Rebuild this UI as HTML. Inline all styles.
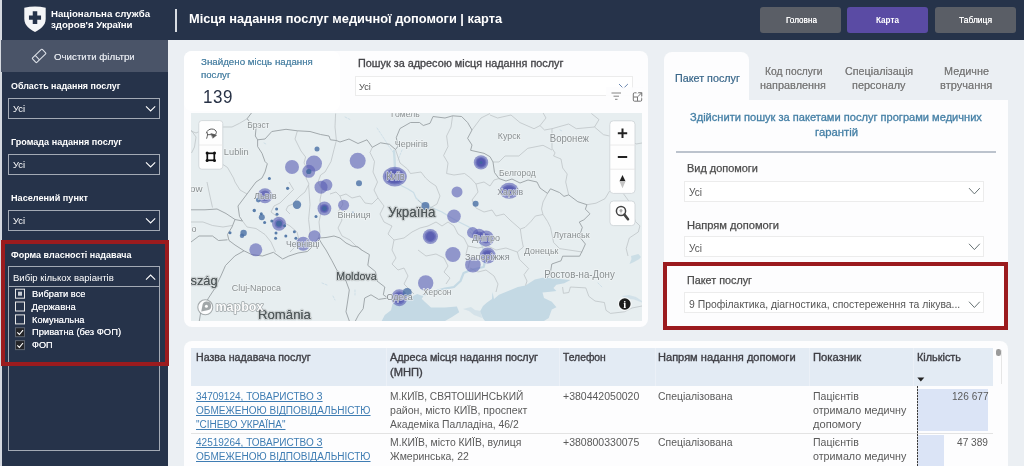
<!DOCTYPE html>
<html lang="uk">
<head>
<meta charset="utf-8">
<title>Місця надання послуг медичної допомоги | карта</title>
<style>
html,body{margin:0;padding:0;}
body{width:1024px;height:466px;overflow:hidden;position:relative;background:#ebeff3;font-family:"Liberation Sans",sans-serif;}
.b{position:absolute;box-sizing:border-box;}
.t{position:absolute;white-space:pre;transform-origin:0 50%;}
svg{position:absolute;overflow:visible;}
</style>
</head>
<body>
<!-- header + sidebar -->
<div class="b" style="left:0;top:0;width:1024px;height:40px;background:#26334a"></div>
<div class="b" style="left:0;top:40px;width:168px;height:426px;background:#26334a"></div>
<div class="b" style="left:0;top:0;width:1.5px;height:466px;background:#d5d9e0"></div>
<div class="b" style="left:1px;top:40px;width:167px;height:32px;background:#4a5468"></div>
<div class="b" style="left:175px;top:9px;width:2px;height:23px;background:#d8dce2"></div>
<!-- logo shield -->
<svg style="left:23px;top:6px" width="24" height="27" viewBox="0 0 24 27">
<path d="M1.3 1.7Q12 -0.9 22.7 1.7L22.7 13C22.7 19.5 17 23.6 12 25.9C7 23.6 1.3 19.5 1.3 13Z" fill="#f4f5f7"/>
<path d="M9.75 5.3h4.5v4.2h3.8v4.2h-3.8v4.2h-4.5v-4.2h-3.8v-4.2h3.8z" fill="#26334a"/>
</svg>
<!-- nav buttons -->
<div class="b" style="left:760px;top:7px;width:80.5px;height:25.5px;border-radius:3px;background:#5a5e66"></div>
<div class="b" style="left:847px;top:7px;width:80.5px;height:25.5px;border-radius:3px;background:#5a4ba4"></div>
<div class="b" style="left:935px;top:7px;width:80.5px;height:25.5px;border-radius:3px;background:#5a5e66"></div>
<!-- eraser icon -->
<svg style="left:31px;top:48px" width="17" height="16" viewBox="0 0 17 16" fill="none" stroke="#dde1e8" stroke-width="1.05" stroke-linejoin="round">
<g transform="translate(8.1,7.9) rotate(-44)"><rect x="-6.8" y="-3.1" width="13.6" height="6.2" rx="0.7"/><path d="M-2.4 -3.1v6.2"/></g>
</svg>
<!-- sidebar dropdowns -->
<div class="b" style="left:8px;top:98px;width:152px;height:21px;border:1px solid #a3aab5"></div>
<div class="b" style="left:8px;top:154px;width:152px;height:21px;border:1px solid #a3aab5"></div>
<div class="b" style="left:8px;top:210px;width:152px;height:21px;border:1px solid #a3aab5"></div>
<div class="b" style="left:8px;top:266px;width:152px;height:21px;border:1px solid #a3aab5"></div>
<div class="b" style="left:8px;top:286px;width:152px;height:165px;border:1px solid #a3aab5"></div>
<svg style="left:0;top:0" width="168" height="466" fill="none" stroke="#fff" stroke-width="1.1">
<path d="M146 106.3l4.6 4.6l4.6-4.6"/><path d="M146 162.3l4.6 4.6l4.6-4.6"/><path d="M146 218.3l4.6 4.6l4.6-4.6"/><path d="M146 279.6l4.6-4.6l4.6 4.6"/>
<!-- checkboxes -->
<rect x="15.5" y="289.2" width="9" height="9" stroke="#e8e8e8" stroke-width="1"/><rect x="18" y="291.7" width="4" height="4" fill="#c8ccd3" stroke="none"/>
<rect x="15.5" y="302" width="9" height="9" stroke="#e8e8e8" stroke-width="1"/>
<rect x="15.5" y="314.9" width="9" height="9" stroke="#e8e8e8" stroke-width="1"/>
<rect x="15.5" y="327.7" width="9" height="9" fill="#232428" stroke="#5d6470" stroke-width="1"/><path d="M17.3 332.4l2.1 2.1l3.6-4.4" stroke-width="1.1"/>
<rect x="15.5" y="340.6" width="9" height="9" fill="#232428" stroke="#5d6470" stroke-width="1"/><path d="M17.3 345.3l2.1 2.1l3.6-4.4" stroke-width="1.1"/>
</svg>
<!-- red highlight sidebar -->
<div class="b" style="left:1px;top:240.3px;width:168px;height:125.3px;border:4.4px solid #9b1b1e"></div>

<!-- map card -->
<div class="b" style="left:184px;top:51px;width:464px;height:276px;border-radius:8px;background:#fdfdfe"></div>
<div class="b" style="left:184px;top:51px;width:156px;height:60px;border-radius:8px;background:#fff"></div>
<div class="b" style="left:355px;top:76px;width:278px;height:20px;border:1px solid #ececec;background:#fff"></div>
<svg style="left:600px;top:78px" width="48" height="28" viewBox="600 78 48 28" fill="none">
<path d="M619 84l4.45 4.45l4.45-4.45" stroke="#6a86b0" stroke-width="1"/>
<rect x="606" y="87.3" width="37" height="17.7" fill="#fdfdfe" opacity="0.92"/>
<path d="M611.5 93h9.5M613.5 96.2h5.5M615 99.3h2.5" stroke="#777" stroke-width="0.9"/>
<rect x="633.3" y="92.8" width="8.4" height="8.4" rx="1.2" stroke="#666" stroke-width="0.9"/>
<path d="M636.5 92.2h6v6" stroke="#fdfdfe" stroke-width="2.4"/>
<path d="M638.2 92.7h3.6v3.6M641.6 92.9l-3.9 3.9M633.6 97h3.9v3.9" stroke="#666" stroke-width="0.9"/>
</svg>
<svg style="left:191px;top:113px;overflow:hidden;will-change:transform;opacity:0.999" width="451" height="208" viewBox="191 113 451 208" font-family="'Liberation Sans', sans-serif">
<rect x="191" y="113" width="451" height="208" fill="#e7eef0"/>
<!-- water -->
<g fill="#c4d9e4">
<path d="M381.7 321L384.8 315L391 310.2L392.5 304L404.9 301L412.6 296.3L417.2 294L423.4 296.3L421.7 298.8L425 302L431 307.6L445 307.6L456.9 306.4L459.2 312.3L452 317L445 321Z"/>
<path d="M485 321L482.7 318L480.3 311L483 306L487 302.5L492 299L492.5 292L494 299L499 294.8L510 290.2L517.8 287L525.5 285.5L534.8 279.4L542.5 277.8L555 278.6L570.4 280L564.2 283.2L556.4 284.8L553.4 287.9L556.4 291L550.3 291.7L542.5 292.5L544 298L551.8 301.8L556.4 307.2L551.8 309.5L548.7 318L544 321Z"/>
<path d="M463 309l6 2l5 4l8 3l-1-7l-6-1l-4-3z" opacity="0.55"/>
<path d="M631 256L638.4 254L641 257L639 259.3L633 262.5L629.5 264L631.5 259Z" opacity="0.8"/>
<path d="M622 296l7 -1l7 2l6 4v1.4l-8-3l-8-1z" opacity="0.6"/>
</g>
<!-- rivers -->
<g fill="none" stroke="#c4d9e4" stroke-linecap="round" stroke-linejoin="round">
<path d="M394 151L394.6 160L395 168" stroke-width="2.4" stroke-opacity="0.8"/>
<path d="M395 168L397 180L400 185L408 189L413.6 192.5L416 198L419.6 201.5L430 206.8L442 212L450 217L457 221L469 227L474 232" stroke-width="1.2" stroke-opacity="0.85"/>
<path d="M486 256L483.7 267L471 270L463.6 273L460.5 281L454 287L445 288.6L432.7 291.7L423.4 294.8" stroke-width="2.2"/>
<path d="M470 232l6 6l6 8l4 10" stroke-width="1.2"/>
<path d="M377 128l6 9l5 8l5 7M402 150l-4 10M345 117l6 3M232 152l3 3M264 143l2 1M322 283l5 2M333 296l2 4M355 290v5M560 130l2 1M598 283l4 4M614 124l3 2" stroke-width="0.7" stroke-dasharray="2 1.5"/>
</g>
<!-- admin-1 borders (light) -->
<g fill="none" stroke="#b9bfc2" stroke-width="0.7" stroke-linejoin="round">
<path d="M297.4 130.8L295 139L301 151L305.6 157L304 163L308 170L306 178L309 184L305 192L300 196L296 200L293 204L288 206L286 210L290 214"/>
<path d="M336.4 140.5L334 149.5L331 161.5L325 172L320.6 175L318 182L322 190L320 200L321 212L319 222L320 232L318.5 238"/>
<path d="M335.6 113.5L335 127L336.4 140.5"/>
<path d="M247 118.8L239.5 123.3L232 127L223 127L214 131L205 129L196 133L191 131"/>
<path d="M223 164.5L227.5 167.5L233.5 178L235 182L240 190L247 194"/>
<path d="M191 130L196 137L194.5 147L191.5 153"/>
<path d="M207 182L209.5 194L212.5 207.5"/>
<path d="M191 222L203 222L212.5 225.5L223 227L232 225.5"/>
<path d="M372.3 147.3L370 152.5L374.5 161.5L373 172L377.5 182L374 190L378 198L372 204L365 203L360 196L352 198L346 194L340 196L336 192L330 194"/>
<path d="M395.5 149.5L400 163L407.5 169L410.5 173.5L421 172L425.6 178L430 182L436 186L440 196L437 204L430 208L422 204L418 200"/>
<path d="M452.6 115.8L451 127L446.6 136L448 146.5L443.6 155.5L448 163L446.6 173.5L454 175L464.6 173.5L470.6 178L476 184L484 182L490 186L494 180L499 178.6"/>
<path d="M490 113.5L481 118L472 130"/>
<path d="M490 115L497.6 118L511 115L520 122.6L534 128.7L540 125.6L546 118L543 112.8"/>
<path d="M540 125.6L544.5 130L552 128.7L568.7 124L576.3 128.7L594.5 127L599 119.6L591.4 113.5"/>
<path d="M594.5 127L603.5 134.7L609.6 136L620 140L630 138L636 144L642 143"/>
<path d="M552 128.7L552 148.3L555 152.9L553.6 156L561 159L562.7 168L567.2 174L565.7 182L568.7 194.9"/>
<path d="M552 150L543 145.3L527.8 148.3L518.8 156L505 156L499 162L493 162"/>
<path d="M547.5 193.4L543 202L541.5 209L543 214.5L535.4 216L531 221.4L525 227.4L520.3 229L521.8 239.5L523.3 247L517.3 252L519.4 259.3L528.6 268.5L524 274.7L527 281L525.5 285.5"/>
<path d="M543 214.5L547.5 221.4L550.5 227.4L553.6 242.5L559.6 248.6L582.3 252"/>
<path d="M586.9 204.7L596 203.2L605 198.7L609.6 191"/>
<path d="M623.2 193.4L629.3 201.7L635.3 221.4L639.9 225.9L638.3 232L629.3 238L626.2 248.6L628 256"/>
<path d="M562.6 287L563.4 293.3L568.8 292.5L570.4 287L585.8 287.9L588.9 296.4L595 301L604.4 302.5L606 310.3L610.5 313.4L624.4 311.8L632 308L642 306"/>
<path d="M242.5 221L247 227L256 228.5L265 234.5L271 242L275.5 252"/>
<path d="M289 182L293.5 189.5L280 203L274 206L271 212L277 216.5L283 222L290 226L297 232L299 240L296 246L290 252"/>
<path d="M308.6 185L310 204.5L308.6 219.5L310 231.5L308.6 237.5"/>
<path d="M340 196L343 204L338 212L342 220L338 228L342 236L350 240L356 246L362 250"/>
<path d="M378 198L384 206L380 214L384 222L392 226L388 234L394 240L404 238L412 232L420 228L428 226L436 222L442 226L448 222L454 226"/>
<path d="M394 240L392 250L396 258L392 264L398 270L404 268L408 276L404 284L410 290L414 294"/>
<path d="M454 226L458 234L464 238L468 246L466 254L470 260L468 268"/>
<path d="M418 250L426 256L436 254L444 258L448 266L444 272L450 278L446 284"/>
<path d="M476 184L478 192L472 200L476 208L484 212L492 210L496 216L504 214L510 220L520.3 229"/>
<path d="M468 246L478 248L488 246L496 250L506 248L517.3 252"/>
<path d="M470 268L478 272L486 270L494 276L498 284L496 292"/>
</g>
<!-- country borders (darker) -->
<g fill="none" stroke="#959c9f" stroke-width="0.85" stroke-linejoin="round">
<path d="M251.6 112.8L247 118.8L249.3 121L256 128.5L255.3 136L257.6 139.8"/>
<path d="M257.6 139.8L265 139L271.8 131.5L286 129.3L297.4 130.8L310 131.5L320.6 134.5L329 136L330.4 139.8L336.4 140.5L340 142L349 139L358 143.5L367 139.8L372.3 147.3L380.5 142.8L389.5 144.3L395.5 149.5L397.8 146.5L396.3 137.5L400 128.5L410.5 122.5L419.5 122.5L423.3 125.5L430 123.3L433 116.5L445 118L452.6 115.8L461.6 116.5L467.6 122.5L472 130L467.6 138.3L472 145L470.6 150.3L484 153.3L490 156.7L493 162L494.5 172.5L499 178.6L506 181L512 179L520 183L528 180L537 182L540 188L547.5 193.4L550.5 188.8L559.6 192.6L564 196.4L568.7 194.9L577.8 201.7L586.9 204.7L585.4 209.2L590 213.8L583.9 219.8L579.3 222L582.3 227.4L580.8 232L579.3 236.5L585.4 244L582.7 250L579.6 256.2L562.6 256.2L561 260.8L551.8 264L550.3 273.2L547.2 277.8"/>
<path d="M257.6 139.8L257.6 146.5L262 153.3L265 161.5L267.3 163.8L265 172L262 178L256 182L247 194L238 206L239.5 216.5L242.5 221L235 219.5L232 227L227.5 234.5L229 240.5L235 245L244 250.8L251.8 254.6L262.6 256L273.4 252.3L282.7 259L288.9 256L298 253L307.4 251.5L312 247L318.5 238L326 237.5L334 236L340 238L346 243L352 246L358 247L361.6 250L369.4 254.6L367.8 265.4L375.5 271.6L377 281L384.8 287L383.3 294.8L388 298L378.6 299.4L371 294.8L364.7 298L363.2 308.7L358.5 315L355.4 321"/>
<path d="M191 209.8L205 209.8L217 209L226 213.5L235 219.5"/>
<path d="M191 242L199 236L212.5 236L218.5 240.5L227.5 239.8"/>
<path d="M244 250.8L234.8 256L225.5 265.5L220.9 276L214.7 288.6L208.5 298L200.8 311.8L199.3 321"/>
<path d="M318.5 238L322 244L326 250L332 260.8L336.8 270L340 274.7L346 281L349.3 290L347.7 301L346 311.8L349.3 321"/>
</g>
<!-- data circles -->
<g fill="#5b5fb5" fill-opacity="0.62">
<circle cx="292" cy="167" r="7"/><circle cx="314" cy="163.6" r="8"/><circle cx="308.8" cy="171.3" r="6.5"/>
<circle cx="357.7" cy="160.8" r="8"/>
<ellipse cx="394.8" cy="176.6" rx="12" ry="9.8"/><ellipse cx="394.8" cy="176.6" rx="10" ry="8"/>
<circle cx="321" cy="187.2" r="6.5"/><circle cx="326.4" cy="185" r="6"/>
<circle cx="265" cy="195.8" r="7.5"/>
<circle cx="324.4" cy="208.5" r="6.9"/><circle cx="324.4" cy="208.5" r="4.5"/>
<circle cx="343.6" cy="205.2" r="5.5"/>
<circle cx="279" cy="223.7" r="7"/><circle cx="279" cy="223.7" r="4.5"/>
<circle cx="303.2" cy="243.8" r="7"/><circle cx="314.5" cy="236.2" r="6"/>
<circle cx="255.8" cy="249.8" r="6.5"/>
<circle cx="481" cy="162.4" r="7.2"/><circle cx="481" cy="162.4" r="5.5"/><circle cx="481" cy="162.4" r="3.6"/>
<ellipse cx="509.2" cy="190.8" rx="9.6" ry="8"/><ellipse cx="509.2" cy="190.8" rx="7.5" ry="6"/>
<circle cx="457" cy="191.9" r="5.5"/>
<circle cx="454" cy="216.2" r="6.8"/>
<circle cx="430.4" cy="236.5" r="7.6"/><circle cx="430.4" cy="236.5" r="5.8"/>
<circle cx="472.6" cy="232.6" r="5.6"/><circle cx="479" cy="235.2" r="6.5"/><circle cx="486" cy="238.4" r="8"/><circle cx="486" cy="238.4" r="5"/>
<circle cx="487.7" cy="255.6" r="8"/><circle cx="487.7" cy="255.6" r="6"/>
<circle cx="452.9" cy="254.5" r="7.6"/>
<circle cx="472.9" cy="264.7" r="7.8"/>
<circle cx="425.7" cy="283" r="7.7"/>
<ellipse cx="399.3" cy="297.8" rx="8" ry="8.5"/><ellipse cx="399.3" cy="297.8" rx="6" ry="6.5"/>
</g>
<g fill="#4a4eaa" fill-opacity="0.55">
<ellipse cx="394.6" cy="176.6" rx="8.6" ry="6.6"/>
<circle cx="265" cy="195.8" r="5.2"/>
<ellipse cx="509.2" cy="190.8" rx="6" ry="4.6"/>
<circle cx="486" cy="238.4" r="4"/><circle cx="479" cy="235.2" r="3.6"/>
<circle cx="487.7" cy="255.6" r="4.6"/>
<ellipse cx="399.3" cy="297.8" rx="4.6" ry="5"/>
<circle cx="481" cy="162.4" r="4.4"/>
<circle cx="430.4" cy="236.5" r="4.4"/>
<circle cx="324.4" cy="208.5" r="3.4"/>
</g>
<g fill="#4a6fa5" fill-opacity="0.8">
<circle cx="317" cy="149" r="2.5"/><circle cx="359" cy="183.3" r="3"/><circle cx="297" cy="204.8" r="4.2"/>
<circle cx="407.2" cy="292.5" r="4.5"/><circle cx="475.6" cy="203.8" r="3"/><circle cx="425.4" cy="206" r="4"/>
<circle cx="243.6" cy="233" r="3.2"/><circle cx="242" cy="235.8" r="2.2"/>
<circle cx="261.8" cy="217.3" r="3"/><circle cx="258.3" cy="200" r="2.4"/>
</g>
<g fill="#3f689e" fill-opacity="0.85">
<circle cx="269.4" cy="178.5" r="1.5"/><circle cx="287.6" cy="188.3" r="1.6"/><circle cx="254.3" cy="210.5" r="1.7"/><circle cx="276.6" cy="209" r="1.5"/>
<circle cx="277" cy="214.3" r="1.5"/><circle cx="261.3" cy="213.8" r="1.5"/><circle cx="264.6" cy="222.5" r="1.5"/><circle cx="271.8" cy="221" r="1.5"/>
<circle cx="316" cy="216.5" r="1.5"/><circle cx="284.6" cy="225.8" r="1.5"/><circle cx="276" cy="233" r="1.5"/><circle cx="275.6" cy="238.3" r="1.5"/>
<circle cx="285.8" cy="236" r="1.5"/><circle cx="294.4" cy="231.8" r="1.5"/><circle cx="295.9" cy="238.3" r="1.5"/><circle cx="230" cy="232.7" r="1.5"/>
<circle cx="308.8" cy="171.5" r="2.6"/><circle cx="324.4" cy="208.5" r="2.4"/><circle cx="279" cy="223.7" r="3"/><circle cx="481" cy="162.4" r="1.5"/>
<circle cx="352.8" cy="212.8" r="1.3" fill-opacity="0.4"/>
</g>
<!-- labels -->
<g fill="#8a9092" stroke="#f0f4f5" stroke-width="1.5" paint-order="stroke" stroke-linejoin="round">
<text x="391" y="117.0" font-size="9.5" textLength="28.6" lengthAdjust="spacingAndGlyphs">Гомель</text>
<text x="247.3" y="127.5" font-size="9.5" textLength="22.1" lengthAdjust="spacingAndGlyphs">Брэст</text>
<text x="223.8" y="154.6" font-size="9.5" textLength="24.8" lengthAdjust="spacingAndGlyphs">Lublin</text>
<text x="394.8" y="146.9" font-size="9.5" textLength="33.0" lengthAdjust="spacingAndGlyphs">Чернігів</text>
<text x="497.8" y="138.7" font-size="9.5" textLength="22.7" lengthAdjust="spacingAndGlyphs">Курск</text>
<text x="549.8" y="141.7" font-size="10.5" textLength="39.2" lengthAdjust="spacingAndGlyphs">Воронеж</text>
<text x="499" y="175.5" font-size="9.5" textLength="36.6" lengthAdjust="spacingAndGlyphs">Белгород</text>
<text x="337.6" y="217.5" font-size="9.5" textLength="33.1" lengthAdjust="spacingAndGlyphs">Вінниця</text>
<text x="231.7" y="291.4" font-size="9.5" textLength="49.3" lengthAdjust="spacingAndGlyphs">Cluj-Napoca</text>
<text x="423" y="294.7" font-size="9.5" textLength="28.4" lengthAdjust="spacingAndGlyphs">Херсон</text>
<text x="524" y="254.3" font-size="9.5" textLength="34.4" lengthAdjust="spacingAndGlyphs">Донецьк</text>
<text x="553.3" y="237.7" font-size="9.5" textLength="36.3" lengthAdjust="spacingAndGlyphs">Луганськ</text>
<text x="544.2" y="278.4" font-size="10.5" textLength="70.6" lengthAdjust="spacingAndGlyphs">Ростов-на-Дону</text>
<text x="190" y="192.3" font-size="9.5" textLength="12.5" lengthAdjust="spacingAndGlyphs">ow</text>
<text x="191.5" y="232.2" font-size="9.5" textLength="5.0" lengthAdjust="spacingAndGlyphs">o</text>
</g>
<g fill="#50585a" font-weight="400" style="text-shadow:0 0 0.7px #50585a" stroke="#f0f4f5" stroke-width="1.6" paint-order="stroke" stroke-linejoin="round">
<text x="388" y="216.5" font-size="14.5" textLength="47.4" lengthAdjust="spacingAndGlyphs">Україна</text>
<text x="336.3" y="279.7" font-size="11.5" textLength="40.3" lengthAdjust="spacingAndGlyphs">Moldova</text>
<text x="190.5" y="285.1" font-size="13.5" textLength="27.1" lengthAdjust="spacingAndGlyphs">szág</text>
<text x="258" y="319.1" font-size="13.5" textLength="52.8" lengthAdjust="spacingAndGlyphs">România</text>
</g>
<!-- city labels on top of circles -->
<g fill="#858b8e" stroke="#eef2f6" stroke-opacity="0.75" stroke-width="1.4" paint-order="stroke" stroke-linejoin="round">
<text x="286" y="246.5" font-size="9.5" textLength="33.5" lengthAdjust="spacingAndGlyphs">Чернівці</text>
<text x="386.3" y="180.1" font-size="10" textLength="18.5" lengthAdjust="spacingAndGlyphs">Київ</text>
<text x="254" y="199.3" font-size="9.5" textLength="22.6" lengthAdjust="spacingAndGlyphs">Львів</text>
<text x="497.3" y="194.7" font-size="9.5" textLength="25.7" lengthAdjust="spacingAndGlyphs">Харків</text>
<text x="472" y="241.0" font-size="9.5" textLength="27.9" lengthAdjust="spacingAndGlyphs">Дніпро</text>
<text x="465" y="259.9" font-size="9.5" textLength="44.6" lengthAdjust="spacingAndGlyphs">Запоріжжя</text>
<text x="386.4" y="300.1" font-size="9.5" textLength="26.4" lengthAdjust="spacingAndGlyphs">Одеса</text>
</g>
<!-- controls -->
<g>
<rect x="198.8" y="120.6" width="24" height="48.6" rx="3" fill="#fff" stroke="#cfd5d8" stroke-width="0.9"/>
<path d="M198.8 145h24" stroke="#e4e4e4" stroke-width="0.8"/>
<g fill="none" stroke="#5a5a5a" stroke-width="1" stroke-linecap="round" transform="translate(0.4,1)">
<path d="M206.3 137.3c0.8-2.6 1.2-4.2 0.6-5.6M206 132c0.5-2.6 3-4 5.4-4s4.6 1.4 4.6 3.4c0 1.2-0.8 2-2 2.3h-6"/>
<path d="M210.8 132.6l5.4 1.6l-3.6 2.8z" fill="#555" stroke-width="0.6"/>
</g>
<rect x="207.3" y="153.3" width="7" height="7" fill="none" stroke="#111" stroke-width="1.7"/>
<g fill="#111"><circle cx="207.1" cy="153.1" r="1.5"/><circle cx="214.5" cy="153.1" r="1.5"/><circle cx="207.1" cy="160.5" r="1.5"/><circle cx="214.5" cy="160.5" r="1.5"/></g>
<rect x="609.8" y="120.8" width="25.2" height="72.6" rx="3.5" fill="#fff" stroke="#cfd5d8" stroke-width="0.9"/>
<path d="M609.8 145h25.2M609.8 169.2h25.2" stroke="#e4e4e4" stroke-width="0.8"/>
<path d="M617.8 133.2h9.4M622.5 128.5v9.4M617.8 157h9.4" stroke="#222" stroke-width="2" fill="none"/>
<path d="M622.5 175l3 6.2h-6z" fill="#222"/><path d="M622.5 188.2l3-6.6h-6z" fill="#c4c4c4"/>
<rect x="609.9" y="201" width="25.1" height="24.6" rx="3.5" fill="#fff" stroke="#cfd5d8" stroke-width="0.9"/>
<circle cx="621" cy="211" r="4.6" fill="none" stroke="#444" stroke-width="1.5"/>
<circle cx="621" cy="210.4" r="1.5" fill="#aaa"/><path d="M621 213.6v-2" stroke="#aaa" stroke-width="0.8"/>
<path d="M624.4 214.6l3.6 4.6" stroke="#444" stroke-width="2.6" stroke-linecap="round"/>
<circle cx="624.8" cy="304" r="7" fill="#fff" fill-opacity="0.6"/>
<circle cx="624.8" cy="304" r="5.8" fill="#1c1c1c"/>
<text x="624.8" y="308" font-size="10.5" font-weight="700" fill="#fff" text-anchor="middle" font-family="'Liberation Serif', serif">i</text>
</g>
<!-- mapbox logo -->
<g>
<circle cx="205.3" cy="307.3" r="7.5" fill="#fff" fill-opacity="0.9" stroke="#8b9194" stroke-opacity="0.75" stroke-width="1.1"/>
<path d="M201.3 311.4l1.1-6a4.4 4.4 0 1 1 5 4.9z" fill="#8b9194" fill-opacity="0.8"/>
<circle cx="206.4" cy="306.2" r="1.5" fill="#fff"/>
<text x="215.4" y="310.8" font-size="13.5" font-weight="700" fill="#fff" fill-opacity="0.95" stroke="#868c8f" stroke-opacity="0.75" stroke-width="1.5" paint-order="stroke" stroke-linejoin="round" textLength="48" lengthAdjust="spacingAndGlyphs">mapbox</text>
</g>
</svg>


<!-- right panel -->
<div class="b" style="left:664px;top:52px;width:85px;height:50px;border-radius:8px 8px 0 0;background:#fdfdfe"></div>
<div class="b" style="left:664px;top:100px;width:344px;height:228px;background:#fdfdfe"></div>
<div class="b" style="left:676px;top:151px;width:320px;height:1.5px;background:#bcc3cd"></div>
<div class="b" style="left:684px;top:181px;width:300px;height:21px;border:1px solid #ececec;background:#fff"></div>
<div class="b" style="left:684px;top:236px;width:300px;height:21px;border:1px solid #ececec;background:#fff"></div>
<div class="b" style="left:684px;top:292px;width:300px;height:21px;border:1px solid #ececec;background:#fff"></div>
<svg style="left:0;top:0" width="1024" height="466" fill="none" stroke="#667173" stroke-width="1">
<path d="M969 188.1l5.4 5.8l5.4-5.8"/><path d="M969 243.8l5.4 5.8l5.4-5.8"/><path d="M969 301.7l5.4 5.8l5.4-5.8"/>
</svg>
<div class="b" style="left:663.2px;top:262px;width:345px;height:67.5px;border:4.5px solid #9b1b1e"></div>

<!-- table card -->
<div class="b" style="left:184px;top:341px;width:824px;height:140px;border-radius:8px;background:#fdfdfe"></div>
<div class="b" style="left:191px;top:348px;width:801.5px;height:38px;background:#e3ebf4"></div>
<div class="b" style="left:386px;top:348px;width:1px;height:38px;background:#ebf0f7"></div>
<div class="b" style="left:559px;top:348px;width:1px;height:38px;background:#ebf0f7"></div>
<div class="b" style="left:655px;top:348px;width:1px;height:38px;background:#ebf0f7"></div>
<div class="b" style="left:809px;top:348px;width:1px;height:38px;background:#ebf0f7"></div>
<div class="b" style="left:913px;top:348px;width:1px;height:38px;background:#ebf0f7"></div>
<div class="b" style="left:191px;top:432.5px;width:801.5px;height:1px;background:#e3e3e3"></div>
<div class="b" style="left:917.5px;top:388.5px;width:70.5px;height:42px;background:#dbe4f6"></div>
<div class="b" style="left:917.5px;top:435px;width:26px;height:31px;background:#dbe4f6"></div>
<div class="b" style="left:916.6px;top:386px;width:1px;height:80px;background:repeating-linear-gradient(to bottom,#3a3a3a 0,#3a3a3a 2px,rgba(60,60,60,0.25) 2px,rgba(60,60,60,0.25) 3px)"></div>
<div class="b" style="left:996px;top:349px;width:4.6px;height:7px;border-radius:2.3px;background:#9a9a9a"></div>
<div class="b" style="left:1001px;top:350px;width:1px;height:34px;background:#e6e6e6"></div>
<svg style="left:917px;top:377px" width="8" height="5" viewBox="0 0 8 5"><path d="M0.3 0.5h7L3.8 4.5z" fill="#222"/></svg>

<span class="t" style="left:51.0px;top:7.8px;font-size:9.3px;line-height:12px;font-weight:700;color:#fff;transform:scaleX(1.038);">Національна служба</span>
<span class="t" style="left:51.0px;top:19.1px;font-size:9.3px;line-height:12px;font-weight:700;color:#fff;transform:scaleX(1.040);">здоров&#x27;я України</span>
<span class="t" style="left:188.8px;top:11.0px;font-size:12.6px;line-height:16px;font-weight:700;color:#fff;transform:scaleX(1.017);">Місця надання послуг медичної допомоги | карта</span>
<span class="t" style="left:785.5px;top:14.9px;font-size:8.2px;line-height:11px;font-weight:400;color:#fff;transform:scaleX(0.996);text-shadow:0 0 0.4px #fff;">Головна</span>
<span class="t" style="left:876.0px;top:14.9px;font-size:8.2px;line-height:11px;font-weight:700;color:#fff;transform:scaleX(0.995);">Карта</span>
<span class="t" style="left:958.5px;top:14.9px;font-size:8.2px;line-height:11px;font-weight:400;color:#fff;transform:scaleX(1.032);text-shadow:0 0 0.4px #fff;">Таблиця</span>
<span class="t" style="left:54.0px;top:50.1px;font-size:9.7px;line-height:13px;font-weight:400;color:#dde1e8;transform:scaleX(1.003);text-shadow:0 0 0.5px #dde1e8;">Очистити фільтри</span>
<span class="t" style="left:10.6px;top:80.3px;font-size:9.5px;line-height:12px;font-weight:700;color:#fff;transform:scaleX(0.938);">Область надання послуг</span>
<span class="t" style="left:10.6px;top:136.3px;font-size:9.5px;line-height:12px;font-weight:700;color:#fff;transform:scaleX(0.954);">Громада надання послуг</span>
<span class="t" style="left:10.6px;top:192.3px;font-size:9.5px;line-height:12px;font-weight:700;color:#fff;transform:scaleX(0.960);">Населений пункт</span>
<span class="t" style="left:10.6px;top:248.8px;font-size:9.5px;line-height:12px;font-weight:700;color:#fff;transform:scaleX(0.946);">Форма власності надавача</span>
<span class="t" style="left:12.9px;top:103.4px;font-size:9.6px;line-height:12px;font-weight:400;color:#fff;transform:scaleX(0.977);">Усі</span>
<span class="t" style="left:12.9px;top:159.4px;font-size:9.6px;line-height:12px;font-weight:400;color:#fff;transform:scaleX(0.977);">Усі</span>
<span class="t" style="left:12.9px;top:215.4px;font-size:9.6px;line-height:12px;font-weight:400;color:#fff;transform:scaleX(0.977);">Усі</span>
<span class="t" style="left:13.0px;top:271.8px;font-size:9.5px;line-height:12px;font-weight:400;color:#fff;transform:scaleX(1.004);">Вибір кількох варіантів</span>
<span class="t" style="left:31.5px;top:287.9px;font-size:9.5px;line-height:12px;font-weight:400;color:#f4f5f8;transform:scaleX(0.978);text-shadow:0 0 0.5px #f4f5f8;">Вибрати все</span>
<span class="t" style="left:31.5px;top:300.8px;font-size:9.5px;line-height:12px;font-weight:400;color:#f4f5f8;transform:scaleX(1.000);text-shadow:0 0 0.5px #f4f5f8;">Державна</span>
<span class="t" style="left:31.5px;top:313.6px;font-size:9.5px;line-height:12px;font-weight:400;color:#f4f5f8;transform:scaleX(0.976);text-shadow:0 0 0.5px #f4f5f8;">Комунальна</span>
<span class="t" style="left:31.5px;top:326.4px;font-size:9.5px;line-height:12px;font-weight:400;color:#f4f5f8;transform:scaleX(0.988);text-shadow:0 0 0.5px #f4f5f8;">Приватна (без ФОП)</span>
<span class="t" style="left:31.5px;top:339.3px;font-size:9.5px;line-height:12px;font-weight:400;color:#f4f5f8;transform:scaleX(0.956);text-shadow:0 0 0.5px #f4f5f8;">ФОП</span>
<span class="t" style="left:201.0px;top:56.1px;font-size:9.3px;line-height:12px;font-weight:400;color:#5488a8;transform:scaleX(1.049);text-shadow:0 0 0.5px #5488a8;">Знайдено місць надання</span>
<span class="t" style="left:201.0px;top:69.0px;font-size:9.3px;line-height:12px;font-weight:400;color:#5488a8;transform:scaleX(1.041);text-shadow:0 0 0.5px #5488a8;">послуг</span>
<span class="t" style="left:203.2px;top:84.6px;font-size:18.3px;line-height:24px;font-weight:400;color:#283246;transform:scaleX(0.929);letter-spacing:0.6px;">139</span>
<span class="t" style="left:357.5px;top:57.1px;font-size:10px;line-height:13px;font-weight:400;color:#444448;transform:scaleX(1.084);-webkit-text-stroke:0.3px #444448;">Пошук за адресою місця надання послуг</span>
<span class="t" style="left:359.4px;top:80.6px;font-size:9.4px;line-height:12px;font-weight:400;color:#505050;transform:scaleX(0.979);">Усі</span>
<span class="t" style="left:674.8px;top:70.8px;font-size:10.5px;line-height:14px;font-weight:400;color:#386689;transform:scaleX(1.025);-webkit-text-stroke:0.2px #386689;">Пакет послуг</span>
<span class="t" style="left:764.5px;top:64.4px;font-size:10.5px;line-height:14px;font-weight:400;color:#7d7d7d;transform:scaleX(0.981);text-shadow:0 0 0.3px #7d7d7d;">Код послуги</span>
<span class="t" style="left:759.5px;top:78.4px;font-size:10.5px;line-height:14px;font-weight:400;color:#7d7d7d;transform:scaleX(1.038);text-shadow:0 0 0.3px #7d7d7d;">направлення</span>
<span class="t" style="left:845.3px;top:64.4px;font-size:10.5px;line-height:14px;font-weight:400;color:#7d7d7d;transform:scaleX(1.025);text-shadow:0 0 0.3px #7d7d7d;">Спеціалізація</span>
<span class="t" style="left:852.0px;top:78.4px;font-size:10.5px;line-height:14px;font-weight:400;color:#7d7d7d;transform:scaleX(1.037);text-shadow:0 0 0.3px #7d7d7d;">персоналу</span>
<span class="t" style="left:943.5px;top:64.4px;font-size:10.5px;line-height:14px;font-weight:400;color:#7d7d7d;transform:scaleX(1.033);text-shadow:0 0 0.3px #7d7d7d;">Медичне</span>
<span class="t" style="left:939.7px;top:78.4px;font-size:10.5px;line-height:14px;font-weight:400;color:#7d7d7d;transform:scaleX(1.052);text-shadow:0 0 0.3px #7d7d7d;">втручання</span>
<span class="t" style="left:690.3px;top:110.0px;font-size:10.5px;line-height:14px;font-weight:400;color:#4680a6;transform:scaleX(1.055);-webkit-text-stroke:0.3px #4680a6;">Здійснити пошук за пакетами послуг програми медичних</span>
<span class="t" style="left:814.5px;top:124.6px;font-size:10.5px;line-height:14px;font-weight:400;color:#4680a6;transform:scaleX(1.077);-webkit-text-stroke:0.3px #4680a6;">гарантій</span>
<span class="t" style="left:687.0px;top:161.2px;font-size:10.5px;line-height:14px;font-weight:400;color:#4c4c4c;transform:scaleX(1.040);-webkit-text-stroke:0.25px #4c4c4c;">Вид допомоги</span>
<span class="t" style="left:689.1px;top:185.9px;font-size:10.2px;line-height:13px;font-weight:400;color:#555;transform:scaleX(0.981);">Усі</span>
<span class="t" style="left:687.0px;top:217.6px;font-size:10.5px;line-height:14px;font-weight:400;color:#4c4c4c;transform:scaleX(1.059);-webkit-text-stroke:0.25px #4c4c4c;">Напрям допомоги</span>
<span class="t" style="left:689.1px;top:241.7px;font-size:10.2px;line-height:13px;font-weight:400;color:#555;transform:scaleX(0.981);">Усі</span>
<span class="t" style="left:687.0px;top:273.4px;font-size:10.5px;line-height:14px;font-weight:400;color:#4c4c4c;transform:scaleX(1.027);-webkit-text-stroke:0.25px #4c4c4c;">Пакет послуг</span>
<span class="t" style="left:689.1px;top:298.1px;font-size:10.2px;line-height:13px;font-weight:400;color:#555;transform:scaleX(1.020);">9 Профілактика, діагностика, спостереження та лікува...</span>
<span class="t" style="left:196.0px;top:351.1px;font-size:10px;line-height:13px;font-weight:400;color:#3e3e44;transform:scaleX(1.063);-webkit-text-stroke:0.35px #3e3e44;">Назва надавача послуг</span>
<span class="t" style="left:389.7px;top:351.1px;font-size:10px;line-height:13px;font-weight:400;color:#3e3e44;transform:scaleX(1.079);-webkit-text-stroke:0.35px #3e3e44;">Адреса місця надання послуг</span>
<span class="t" style="left:389.7px;top:365.5px;font-size:10px;line-height:13px;font-weight:400;color:#3e3e44;transform:scaleX(1.115);-webkit-text-stroke:0.35px #3e3e44;">(МНП)</span>
<span class="t" style="left:562.7px;top:351.1px;font-size:10px;line-height:13px;font-weight:400;color:#3e3e44;transform:scaleX(1.032);-webkit-text-stroke:0.35px #3e3e44;">Телефон</span>
<span class="t" style="left:658.0px;top:351.1px;font-size:10px;line-height:13px;font-weight:400;color:#3e3e44;transform:scaleX(1.105);-webkit-text-stroke:0.35px #3e3e44;">Напрям надання допомоги</span>
<span class="t" style="left:812.7px;top:351.1px;font-size:10px;line-height:13px;font-weight:400;color:#3e3e44;transform:scaleX(1.127);-webkit-text-stroke:0.35px #3e3e44;">Показник</span>
<span class="t" style="left:917.0px;top:351.1px;font-size:10px;line-height:13px;font-weight:400;color:#3e3e44;transform:scaleX(1.087);-webkit-text-stroke:0.35px #3e3e44;">Кількість</span>
<span class="t" style="left:196.0px;top:390.1px;font-size:10px;line-height:13px;font-weight:400;color:#3f7db3;transform:scaleX(1.002);text-decoration:underline;text-underline-offset:0.8px;text-decoration-thickness:1px;text-decoration-skip-ink:none;">34709124, ТОВАРИСТВО З</span>
<span class="t" style="left:196.0px;top:404.0px;font-size:10px;line-height:13px;font-weight:400;color:#3f7db3;transform:scaleX(1.005);text-decoration:underline;text-underline-offset:0.8px;text-decoration-thickness:1px;text-decoration-skip-ink:none;">ОБМЕЖЕНОЮ ВІДПОВІДАЛЬНІСТЮ</span>
<span class="t" style="left:196.0px;top:418.1px;font-size:10px;line-height:13px;font-weight:400;color:#3f7db3;transform:scaleX(1.001);text-decoration:underline;text-underline-offset:0.8px;text-decoration-thickness:1px;text-decoration-skip-ink:none;">&quot;СІНЕВО УКРАЇНА&quot;</span>
<span class="t" style="left:196.0px;top:436.1px;font-size:10px;line-height:13px;font-weight:400;color:#3f7db3;transform:scaleX(1.002);text-decoration:underline;text-underline-offset:0.8px;text-decoration-thickness:1px;text-decoration-skip-ink:none;">42519264, ТОВАРИСТВО З</span>
<span class="t" style="left:196.0px;top:450.4px;font-size:10px;line-height:13px;font-weight:400;color:#3f7db3;transform:scaleX(1.005);text-decoration:underline;text-underline-offset:0.8px;text-decoration-thickness:1px;text-decoration-skip-ink:none;">ОБМЕЖЕНОЮ ВІДПОВІДАЛЬНІСТЮ</span>
<span class="t" style="left:389.7px;top:390.1px;font-size:10px;line-height:13px;font-weight:400;color:#5a5a5a;transform:scaleX(1.018);">М.КИЇВ, СВЯТОШИНСЬКИЙ</span>
<span class="t" style="left:389.7px;top:404.0px;font-size:10px;line-height:13px;font-weight:400;color:#5a5a5a;transform:scaleX(1.057);">район, місто КИЇВ, проспект</span>
<span class="t" style="left:389.7px;top:418.1px;font-size:10px;line-height:13px;font-weight:400;color:#5a5a5a;transform:scaleX(1.035);">Академіка Палладіна, 46/2</span>
<span class="t" style="left:389.7px;top:436.1px;font-size:10px;line-height:13px;font-weight:400;color:#5a5a5a;transform:scaleX(1.038);">М.КИЇВ, місто КИЇВ, вулиця</span>
<span class="t" style="left:389.7px;top:450.4px;font-size:10px;line-height:13px;font-weight:400;color:#5a5a5a;transform:scaleX(1.045);">Жмеринська, 22</span>
<span class="t" style="left:562.7px;top:390.1px;font-size:10px;line-height:13px;font-weight:400;color:#5a5a5a;transform:scaleX(1.051);">+380442050020</span>
<span class="t" style="left:562.7px;top:436.1px;font-size:10px;line-height:13px;font-weight:400;color:#5a5a5a;transform:scaleX(1.051);">+380800330075</span>
<span class="t" style="left:658.0px;top:390.1px;font-size:10px;line-height:13px;font-weight:400;color:#5a5a5a;transform:scaleX(1.040);">Спеціалізована</span>
<span class="t" style="left:658.0px;top:436.1px;font-size:10px;line-height:13px;font-weight:400;color:#5a5a5a;transform:scaleX(1.040);">Спеціалізована</span>
<span class="t" style="left:812.7px;top:390.1px;font-size:10px;line-height:13px;font-weight:400;color:#5a5a5a;transform:scaleX(1.054);">Пацієнтів</span>
<span class="t" style="left:812.7px;top:404.0px;font-size:10px;line-height:13px;font-weight:400;color:#5a5a5a;transform:scaleX(1.070);">отримало медичну</span>
<span class="t" style="left:812.7px;top:418.1px;font-size:10px;line-height:13px;font-weight:400;color:#5a5a5a;transform:scaleX(1.111);">допомогу</span>
<span class="t" style="left:812.7px;top:436.1px;font-size:10px;line-height:13px;font-weight:400;color:#5a5a5a;transform:scaleX(1.054);">Пацієнтів</span>
<span class="t" style="left:812.7px;top:450.4px;font-size:10px;line-height:13px;font-weight:400;color:#5a5a5a;transform:scaleX(1.070);">отримало медичну</span>
<span class="t" style="left:951.5px;top:390.3px;font-size:10px;line-height:13px;font-weight:400;color:#5a5a5a;transform:scaleX(1.010);">126 677</span>
<span class="t" style="left:957.0px;top:436.3px;font-size:10px;line-height:13px;font-weight:400;color:#5a5a5a;transform:scaleX(1.013);">47 389</span>
</body>
</html>
